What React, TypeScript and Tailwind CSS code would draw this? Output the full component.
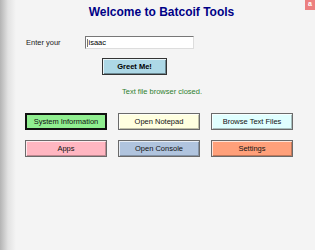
import React from "react";

const buttons = [
  { label: "System Information", bg: "bg-[#90ee90]", focused: true },
  { label: "Open Notepad", bg: "bg-[#ffffe0]" },
  { label: "Browse Text Files", bg: "bg-[#e0ffff]" },
  { label: "Apps", bg: "bg-[#ffb6c1]" },
  { label: "Open Console", bg: "bg-[#b0c4de]" },
  { label: "Settings", bg: "bg-[#ffa07a]" },
];

export default function App() {
  return (
    <div className="relative w-[315px] h-[250px] overflow-hidden bg-[#f4f4f4] font-['Liberation_Sans',Arial,sans-serif] text-[7.5px] text-black">
      {/* left window shadow */}
      <div className="absolute inset-y-0 left-0 w-[16px] bg-gradient-to-r from-[#b4b4b4] via-[#e2e2e2] to-transparent pointer-events-none" />

      {/* close badge */}
      <div className="absolute top-0 right-0 w-[10px] h-[10px] bg-[#ec8080] flex items-start justify-center">
        <span className="text-white text-[7px] leading-[8px] font-bold">a</span>
      </div>

      <h1 className="pt-[5px] h-[24px] text-center pl-[8px] text-[12px] leading-[15px] font-bold text-[#000086]">
        Welcome to Batcoif Tools
      </h1>

      <div className="mt-[12px] flex items-center h-[13px]">
        <span className="ml-[26px] w-[59px] text-[#1a1a1a]">Enter your</span>
        <div className="w-[109px] h-[13px] bg-white border border-t-[#777] border-l-[#777] border-b-[#ddd] border-r-[#ddd] flex items-center pl-[1px]">
          <span className="w-px h-[8px] bg-[#777] mr-[0.5px]" />
          <span>isaac</span>
        </div>
      </div>

      <div className="mt-[9px] pl-[102px]">
        <button className="w-[65px] h-[17px] bg-[#add8e6] border border-[#333] shadow-[inset_1px_1px_0_#e8f4f8,inset_-1px_-1px_0_#6c8a94] font-bold text-[7.5px] leading-none">
          Greet Me!
        </button>
      </div>

      <p className="mt-[11px] pl-[122px] text-[#2f7f2f] leading-[11px]">Text file browser closed.</p>

      <div className="mt-[16px] ml-[25px] grid grid-cols-[82px_82px_82px] gap-x-[11px] gap-y-[10px]">
        {buttons.map((b) => (
          <button
            key={b.label}
            className={`${b.bg} h-[17px] text-[7.5px] leading-none text-[#111] ${
              b.focused
                ? "border-2 border-[#111]"
                : "border border-[#6a6a6a] shadow-[inset_1px_1px_0_rgba(255,255,255,0.7),inset_-1px_-1px_0_rgba(0,0,0,0.25)]"
            }`}
          >
            {b.label}
          </button>
        ))}
      </div>
    </div>
  );
}
